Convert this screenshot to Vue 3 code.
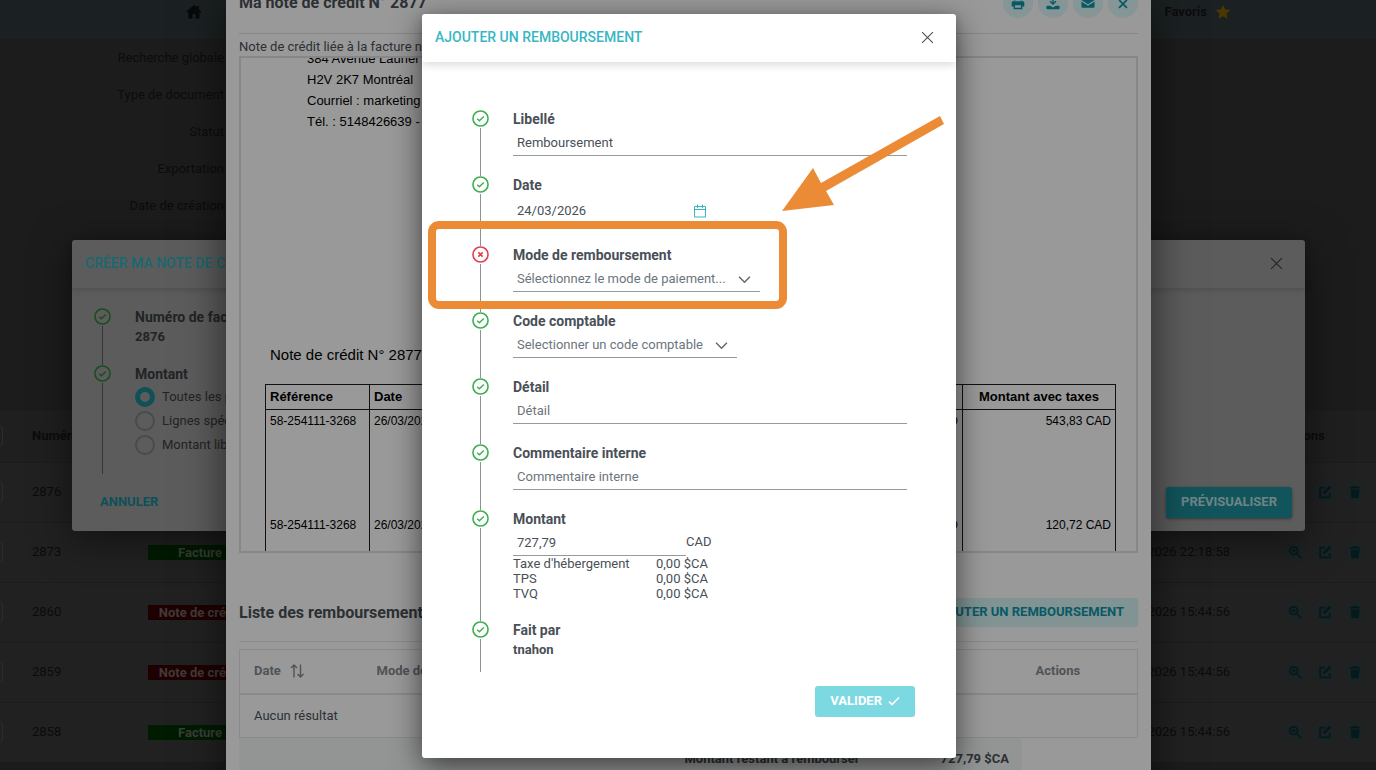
<script setup>
import { ref } from "vue";

const icons = {
  home: "M8 1 0.5 7.6 1.6 8.8 2.5 8v6.5h4V10h3v4.5h4V8l.9.8 1.1-1.2-2.5-2.2V2h-2v1.6z",
  star: "M8 .8l2.2 4.7 5.1.6-3.8 3.5 1 5.1L8 12.2l-4.5 2.5 1-5.1L.7 6.1l5.1-.6z",
  print:
    "M3.5 1h9v4h-1.6V2.6H5.1V5H3.5zM2.5 6h11A1.7 1.7 0 0 1 15.2 7.7V12H13v3H3v-3H.8V7.7A1.7 1.7 0 0 1 2.5 6zM4.6 10.5v3h6.8v-3z",
  download:
    "M7.2 1h1.6v6.3l2-2 1.1 1.2L8 10.4 4.1 6.5l1.1-1.2 2 2zM1.5 11h3.2L8 13.2 11.3 11h3.2a1 1 0 0 1 1 1v2a1 1 0 0 1-1 1h-13a1 1 0 0 1-1-1v-2a1 1 0 0 1 1-1z",
  mail: "M2 2.5h12A1.5 1.5 0 0 1 15.5 4v.6L8 9.4.5 4.6V4A1.5 1.5 0 0 1 2 2.5zM.5 6.3 8 11l7.5-4.7V12a1.5 1.5 0 0 1-1.5 1.5H2A1.5 1.5 0 0 1 .5 12z",
  trash: "M5.5 1h5l.6 1.2H14V4H2V2.2h2.9zM3 5h10l-.6 8.6A1.5 1.5 0 0 1 10.9 15H5.1a1.5 1.5 0 0 1-1.5-1.4z",
};

const filters = [
  "Recherche globale",
  "Type de document",
  "Statut",
  "Exportation",
  "Date de création",
];

const documents = [
  { number: 2876, type: "Note de crédit", date: "24/03/2026 22:18:58" },
  { number: 2873, type: "Facture", date: "23/03/2026 22:18:58" },
  { number: 2860, type: "Note de crédit", date: "20/03/2026 15:44:56" },
  { number: 2859, type: "Note de crédit", date: "20/03/2026 15:44:56" },
  { number: 2858, type: "Facture", date: "20/03/2026 15:44:56" },
];

const lines = [
  { ref: "58-254111-3268", date: "26/03/2026", total: "543,83 CAD" },
  { ref: "58-254111-3268", date: "26/03/2026", total: "120,72 CAD" },
];

const amountModes = ["Toutes les prestations", "Lignes spécifiques", "Montant libre"];
const amountMode = ref(amountModes[0]);

const taxes = [
  { name: "Taxe d'hébergement", amount: "0,00 $CA" },
  { name: "TPS", amount: "0,00 $CA" },
  { name: "TVQ", amount: "0,00 $CA" },
];

const label = ref("Remboursement");
const date = ref("24/03/2026");
const paymentMode = ref("");
const accountCode = ref("");
const detail = ref("");
const comment = ref("");
const amount = ref("727,79");
</script>

<template>
  <div class="app">
    <div class="page">
      <header class="topbar">
        <svg class="home" viewBox="0 0 16 16"><path :d="icons.home" /></svg>
        <div class="favorites">
          <span>Favoris</span>
          <svg viewBox="0 0 16 16"><path :d="icons.star" /></svg>
        </div>
      </header>
      <ul class="filters">
        <li v-for="filter in filters" :key="filter">{{ filter }}</li>
      </ul>
      <table class="documents">
        <thead>
          <tr>
            <th class="col-check"><input type="checkbox" aria-label="Tout" /></th>
            <th class="col-number">Numéro</th>
            <th class="col-type"></th>
            <th></th>
            <th class="col-date"></th>
            <th class="col-actions">Actions</th>
          </tr>
        </thead>
        <tbody>
          <tr v-for="doc in documents" :key="doc.number">
            <td class="col-check">
              <input type="checkbox" :aria-label="String(doc.number)" />
            </td>
            <td class="col-number">{{ doc.number }}</td>
            <td class="col-type">
              <span class="badge" :class="{ credit: doc.type !== 'Facture' }">{{
                doc.type
              }}</span>
            </td>
            <td></td>
            <td class="col-date">{{ doc.date }}</td>
            <td class="col-actions">
              <div class="row-actions">
                <button type="button" aria-label="Voir">
                  <svg viewBox="0 0 16 16" class="stroked">
                    <circle cx="6.5" cy="6.5" r="4.5" />
                    <path d="M10 10l5 5M6.5 4.5v4M4.5 6.5h4" />
                  </svg>
                </button>
                <button type="button" aria-label="Modifier">
                  <svg viewBox="0 0 16 16" class="stroked">
                    <path d="M8 3H2.5v11h11V9" />
                    <path d="M6.5 9.5 14 2" class="pen" />
                  </svg>
                </button>
                <button type="button" aria-label="Supprimer">
                  <svg viewBox="0 0 16 16"><path :d="icons.trash" /></svg>
                </button>
              </div>
            </td>
          </tr>
        </tbody>
      </table>
    </div>

    <div class="layer layer-create">
      <section class="dialog create">
        <header class="dialog-head">
          <h2>CRÉER MA NOTE DE CRÉDIT</h2>
          <button type="button" class="close" aria-label="Fermer">
            <svg viewBox="0 0 12 12"><path d="M1 1l10 10M11 1 1 11" /></svg>
          </button>
        </header>
        <ol class="steps">
          <li class="step">
            <div class="marker">
              <svg viewBox="0 0 18 18">
                <circle cx="9" cy="9" r="8" />
                <path d="M5.5 9.3l2.3 2.2 4.7-4.7" />
              </svg>
            </div>
            <div class="content">
              <h3>Numéro de facture</h3>
              <strong class="value">2876</strong>
            </div>
          </li>
          <li class="step">
            <div class="marker">
              <svg viewBox="0 0 18 18">
                <circle cx="9" cy="9" r="8" />
                <path d="M5.5 9.3l2.3 2.2 4.7-4.7" />
              </svg>
            </div>
            <div class="content">
              <h3>Montant</h3>
              <div class="radios">
                <label v-for="mode in amountModes" :key="mode">
                  <input v-model="amountMode" type="radio" name="mode" :value="mode" />
                  {{ mode }}
                </label>
              </div>
            </div>
          </li>
        </ol>
        <footer class="create-foot">
          <button type="button" class="cancel">ANNULER</button>
          <button type="button" class="preview">PRÉVISUALISER</button>
        </footer>
      </section>
    </div>

    <div class="layer layer-note">
      <section class="note">
        <header class="note-head">
          <h2>Ma note de crédit N° 2877</h2>
          <div class="note-actions">
            <button type="button" aria-label="Imprimer">
              <svg viewBox="0 0 16 16"><path :d="icons.print" fill-rule="evenodd" /></svg>
            </button>
            <button type="button" aria-label="Télécharger">
              <svg viewBox="0 0 16 16"><path :d="icons.download" /></svg>
            </button>
            <button type="button" aria-label="Envoyer">
              <svg viewBox="0 0 16 16"><path :d="icons.mail" /></svg>
            </button>
            <button type="button" aria-label="Fermer">
              <svg viewBox="0 0 16 16" class="stroked">
                <path d="M3.5 4.500l9 9M12.500 4.500l-9 9" />
              </svg>
            </button>
          </div>
        </header>
        <p class="linked">Note de crédit liée à la facture n° 2876</p>
        <div class="document">
          <address>
            384 Avenue Laurier<br />
            H2V 2K7 Montréal<br />
            Courriel : marketing<br />
            Tél. : 5148426639 -
          </address>
          <p class="document-title">Note de crédit N° 2877</p>
          <table class="lines">
            <thead>
              <tr>
                <th class="line-ref">Référence</th>
                <th class="line-net">Date</th>
                <th class="line-total">Montant avec taxes</th>
              </tr>
            </thead>
            <tbody>
              <tr v-for="(line, i) in lines" :key="i">
                <td>{{ line.ref }}</td>
                <td>
                  <div class="split">
                    <span>{{ line.date }}</span>
                    <span>CAD</span>
                  </div>
                </td>
                <td class="line-total">{{ line.total }}</td>
              </tr>
            </tbody>
          </table>
        </div>
        <div class="refunds-head">
          <h3>Liste des remboursements</h3>
          <button type="button">AJOUTER UN REMBOURSEMENT</button>
        </div>
        <table class="refunds">
          <thead>
            <tr>
              <th class="refund-date">
                <div class="sortable">
                  <span>Date</span>
                  <svg viewBox="0 0 14 14">
                    <path d="M4 13.5V1M1 4l3-3 3 3M10.5.5V13M7.5 10l3 3 3-3" />
                  </svg>
                </div>
              </th>
              <th>Mode de remboursement</th>
              <th class="refund-actions">Actions</th>
            </tr>
          </thead>
          <tbody>
            <tr>
              <td colspan="3">Aucun résultat</td>
            </tr>
          </tbody>
        </table>
        <div class="remaining">
          <span>Montant restant à rembourser</span>
          <span>727,79 $CA</span>
        </div>
      </section>
    </div>

    <div class="layer layer-refund">
      <form class="dialog refund" @submit.prevent>
        <header class="dialog-head">
          <h2>AJOUTER UN REMBOURSEMENT</h2>
          <button type="button" class="close" aria-label="Fermer">
            <svg viewBox="0 0 12 12"><path d="M1 1l10 10M11 1 1 11" /></svg>
          </button>
        </header>
        <ol class="steps">
          <li class="step">
            <div class="marker">
              <svg viewBox="0 0 18 18">
                <circle cx="9" cy="9" r="8" />
                <path d="M5.5 9.3l2.3 2.2 4.7-4.7" />
              </svg>
            </div>
            <div class="content">
              <label for="label">Libellé</label>
              <input id="label" v-model="label" type="text" class="field" />
            </div>
          </li>
          <li class="step">
            <div class="marker">
              <svg viewBox="0 0 18 18">
                <circle cx="9" cy="9" r="8" />
                <path d="M5.5 9.3l2.3 2.2 4.7-4.7" />
              </svg>
            </div>
            <div class="content">
              <label for="date">Date</label>
              <div class="field date-field">
                <input id="date" v-model="date" type="text" />
                <svg viewBox="0 0 14 14">
                  <path d="M1.5 2.5h11v10.5h-11zM1.5 5.5h11M4.5.5V4M9.5.5V4" />
                </svg>
              </div>
            </div>
          </li>
          <li class="step invalid">
            <div class="marker">
              <svg viewBox="0 0 18 18">
                <circle cx="9" cy="9" r="8" />
                <path d="M6.7 6.7l4.6 4.6M11.3 6.7l-4.6 4.6" />
              </svg>
            </div>
            <div class="content">
              <label for="mode">Mode de remboursement</label>
              <div class="picker mode-picker">
                <select id="mode" v-model="paymentMode" class="field">
                  <option value="">Sélectionnez le mode de paiement...</option>
                </select>
                <svg viewBox="0 0 12 8"><path d="M1 1.5l5 5 5-5" /></svg>
              </div>
            </div>
          </li>
          <li class="step">
            <div class="marker">
              <svg viewBox="0 0 18 18">
                <circle cx="9" cy="9" r="8" />
                <path d="M5.5 9.3l2.3 2.2 4.7-4.7" />
              </svg>
            </div>
            <div class="content">
              <label for="code">Code comptable</label>
              <div class="picker code-picker">
                <select id="code" v-model="accountCode" class="field">
                  <option value="">Selectionner un code comptable</option>
                </select>
                <svg viewBox="0 0 12 8"><path d="M1 1.5l5 5 5-5" /></svg>
              </div>
            </div>
          </li>
          <li class="step">
            <div class="marker">
              <svg viewBox="0 0 18 18">
                <circle cx="9" cy="9" r="8" />
                <path d="M5.5 9.3l2.3 2.2 4.7-4.7" />
              </svg>
            </div>
            <div class="content">
              <label for="detail">Détail</label>
              <input id="detail" v-model="detail" type="text" class="field" placeholder="Détail" />
            </div>
          </li>
          <li class="step">
            <div class="marker">
              <svg viewBox="0 0 18 18">
                <circle cx="9" cy="9" r="8" />
                <path d="M5.5 9.3l2.3 2.2 4.7-4.7" />
              </svg>
            </div>
            <div class="content">
              <label for="comment">Commentaire interne</label>
              <input
                id="comment"
                v-model="comment"
                type="text"
                class="field"
                placeholder="Commentaire interne"
              />
            </div>
          </li>
          <li class="step">
            <div class="marker">
              <svg viewBox="0 0 18 18">
                <circle cx="9" cy="9" r="8" />
                <path d="M5.5 9.3l2.3 2.2 4.7-4.7" />
              </svg>
            </div>
            <div class="content">
              <label for="amount">Montant</label>
              <div class="amount">
                <input id="amount" v-model="amount" type="text" class="field" />
                <span>CAD</span>
              </div>
              <dl class="taxes">
                <template v-for="tax in taxes" :key="tax.name">
                  <dt>{{ tax.name }}</dt>
                  <dd>{{ tax.amount }}</dd>
                </template>
              </dl>
            </div>
          </li>
          <li class="step last">
            <div class="marker">
              <svg viewBox="0 0 18 18">
                <circle cx="9" cy="9" r="8" />
                <path d="M5.5 9.3l2.3 2.2 4.7-4.7" />
              </svg>
            </div>
            <div class="content">
              <h3>Fait par</h3>
              <strong class="value">tnahon</strong>
            </div>
          </li>
        </ol>
        <footer class="refund-foot">
          <button type="submit" disabled>
            VALIDER
            <svg viewBox="0 0 12 10"><path d="M1 5.5l3 3L11 1.5" /></svg>
          </button>
        </footer>
        <div class="highlight"></div>
        <svg class="arrow" viewBox="0 0 164 98">
          <path d="M0 96 31 53 39 68 158 1 162 9 44 76 52 90z" />
        </svg>
      </form>
    </div>
  </div>
</template>

<style>
body {
  margin: 0;
  background: #1c1c1c;
}
</style>

<style scoped>
.app {
  position: relative;
  height: 100vh;
  overflow: hidden;
  font-family: Roboto, "Liberation Sans", sans-serif;
  font-size: 13px;
  line-height: 16px;
  color: #495057;
}

.app * {
  box-sizing: border-box;
}

h2,
h3,
p,
ul,
ol,
dl,
dd {
  margin: 0;
  padding: 0;
  list-style: none;
}

button,
input,
select {
  font: inherit;
  color: inherit;
  margin: 0;
  padding: 0;
  border: 0;
  background: none;
}

svg {
  display: block;
}

/* page */
.page {
  color: #0b0c0d;
  background: #1c1c1c;
}

.topbar {
  display: flex;
  justify-content: space-between;
  height: 39px;
  padding: 4px 145px 0 186px;
  background: #1b2122;
}

.topbar svg {
  width: 16px;
  height: 16px;
  fill: #080909;
}

.favorites {
  display: flex;
  gap: 8px;
  font-weight: 700;
}

.favorites svg {
  fill: #4b3800;
}

.filters {
  display: grid;
  grid-auto-rows: 37px;
  width: 224px;
  height: 372px;
  text-align: right;
  line-height: 37px;
}

.documents {
  width: 100%;
  table-layout: fixed;
  border-collapse: collapse;
  background: #212121;
}

.documents th,
.documents td {
  padding: 0;
  text-align: left;
  border-bottom: 1px solid #1b1c1c;
}

.documents th {
  height: 51px;
  font-weight: 700;
  background: #1f1f1f;
}

.documents td {
  height: 60px;
}

.documents .col-check {
  width: 32px;
}

.documents .col-check input {
  display: block;
  appearance: none;
  width: 20px;
  height: 20px;
  margin-left: -17px;
  border: 1px solid #2b2c2c;
  border-radius: 3px;
}

.documents .col-number {
  width: 116px;
}

.documents .col-type {
  width: 104px;
}

.documents .col-date {
  width: 140px;
  padding-right: 10px;
  text-align: right;
}

.documents .col-actions {
  width: 136px;
  padding-left: 40px;
}

.badge {
  display: block;
  line-height: 15px;
  text-align: center;
  font-weight: 700;
  color: #3a3f3a;
  background: #001b00;
}

.badge.credit {
  color: #423a3a;
  background: #1e0000;
}

.row-actions {
  display: flex;
  gap: 4px;
  padding-left: 2px;
}

.row-actions button {
  display: grid;
  place-items: center;
  width: 26px;
  height: 26px;
  border-radius: 50%;
  background: #1e2223;
}

.row-actions svg {
  width: 14px;
  height: 14px;
  fill: #021b1e;
}

.row-actions .stroked {
  fill: none;
  stroke: #021b1e;
  stroke-width: 2;
}

.row-actions .pen {
  stroke-width: 3;
}

/* stacked dialogs */
.layer {
  position: absolute;
  inset: 0;
  display: flex;
  justify-content: center;
  align-items: center;
}

.dialog {
  position: relative;
  border-radius: 3px;
}

.dialog-head {
  display: flex;
  justify-content: space-between;
  align-items: center;
  height: 48px;
  padding: 0 22px 2px 13px;
}

.dialog-head h2 {
  font-size: 14px;
  font-weight: 500;
}

.close svg {
  width: 13px;
  height: 13px;
  fill: none;
  stroke: currentColor;
}

.step {
  display: flex;
  gap: 24px;
}

.marker {
  display: flex;
  flex-direction: column;
  align-items: center;
  gap: 1px;
  flex: none;
  width: 17px;
}

.marker svg {
  width: 17px;
  height: 17px;
  fill: none;
  stroke: #3fae52;
  stroke-width: 1.7;
}

.marker path {
  stroke-width: 1.5;
}

.marker::after {
  content: "";
  flex: 1;
  width: 1px;
  background: #8f9396;
}

.content {
  flex: 1;
  padding-bottom: 20px;
}

.content h3,
.content > label {
  display: block;
  font-size: 14px;
  font-weight: 700;
  line-height: 18px;
}

.value {
  display: block;
  margin-top: 3px;
  line-height: 16px;
}

/* credit note creation */
.layer-create {
  padding: 1px 71px 0 72px;
}

.create {
  flex: 1;
  color: #212426;
  background: #5c5c5c;
  box-shadow: 0 8px 40px rgba(0, 0, 0, 0.5);
}

.create .dialog-head {
  box-shadow: 0 2px 6px rgba(0, 0, 0, 0.15);
}

.create .dialog-head h2 {
  color: #176970;
}

.create .steps {
  padding: 20px 22px 0;
}

.create .marker svg {
  stroke: #1a4d22;
}

.create .marker::after {
  background: #343637;
}

.radios {
  display: grid;
  grid-auto-rows: 24px;
  margin: 2px 0 -3px;
}

.radios label {
  display: flex;
  align-items: center;
  gap: 7px;
}

.radios input {
  appearance: none;
  width: 20px;
  height: 20px;
  border: 2px solid #484b4d;
  border-radius: 50%;
}

.radios input:checked {
  border: 5px solid #0f5157;
}

.create-foot {
  display: flex;
  justify-content: space-between;
  align-items: center;
  padding: 13px 13px 13px 28px;
  font-weight: 700;
}

.create-foot button {
  height: 31px;
  padding-bottom: 2px;
}

.cancel {
  color: #0d5158;
}

.create-foot .preview {
  padding: 0 15px 2px;
  border-radius: 3px;
  color: #6d8587;
  background: #12545b;
  box-shadow: 0 1px 3px rgba(0, 0, 0, 0.4);
}

/* credit note */
.layer-note {
  padding: 0 225px 0 226px;
  align-items: flex-start;
}

.note {
  flex: 1;
  min-width: 0;
  min-height: 100vh;
  margin-top: -12px;
  padding: 0 13px 20px;
  color: #2c3034;
  background: #999;
  box-shadow: 0 8px 40px rgba(0, 0, 0, 0.6);
}

.note-head {
  display: flex;
  justify-content: space-between;
  align-items: center;
  padding-bottom: 15px;
  border-bottom: 1px solid #858788;
}

.note-head h2 {
  font-size: 16px;
  font-weight: 700;
}

.note-actions {
  display: flex;
  gap: 5px;
}

.note-actions button {
  display: grid;
  place-items: center;
  width: 30px;
  height: 30px;
  border-radius: 50%;
  background: #869595;
}

.note-actions svg {
  width: 14px;
  height: 14px;
  fill: #075a65;
}

.note-actions .stroked {
  stroke: #075a65;
  stroke-width: 2;
}

.linked {
  padding-top: 4px;
  line-height: 18px;
}

.document {
  height: 497px;
  padding: 0 20px 0 24px;
  border: 2px solid #858788;
  overflow: hidden;
  font-family: "Liberation Sans", Arial, sans-serif;
  color: #000;
}

.document address {
  margin-top: -10px;
  padding-left: 42px;
  font-style: normal;
  line-height: 21px;
}

.document-title {
  margin-top: 213px;
  padding-left: 5px;
  font-size: 15px;
  line-height: 20px;
}

.lines {
  width: 100%;
  margin-top: 19px;
  table-layout: fixed;
  border-collapse: collapse;
  border: 1px solid #111;
}

.lines th,
.lines td {
  padding: 4px;
  text-align: left;
  vertical-align: top;
  border-right: 1px solid #111;
}

.lines th {
  border-bottom: 1px solid #111;
}

.lines td {
  height: 104px;
  padding-top: 3px;
  font-size: 12px;
}

.lines .line-ref {
  width: 104px;
}

.lines .line-total {
  width: 153px;
  text-align: center;
}

.lines td.line-total {
  text-align: right;
}

.split {
  display: flex;
  justify-content: space-between;
}

.refunds-head {
  display: flex;
  justify-content: space-between;
  align-items: center;
  margin-top: 45px;
  padding-bottom: 14px;
  border-bottom: 1px solid #898b8c;
}

.refunds-head h3 {
  font-size: 16px;
  font-weight: 700;
}

.refunds-head button {
  height: 29px;
  padding: 0 14px 2px;
  border-radius: 3px;
  font-weight: 700;
  color: #075a65;
  background: #829393;
}

.refunds {
  width: 100%;
  margin-top: 7px;
  table-layout: fixed;
  border-collapse: collapse;
  border: 1px solid #888a8b;
}

.refunds th,
.refunds td {
  height: 44px;
  padding: 0 14px;
  text-align: left;
}

.refunds th {
  font-weight: 700;
  color: #4f5356;
  border-bottom: 2px solid #888a8b;
}

.refunds .refund-date {
  width: 123px;
}

.sortable {
  display: flex;
  align-items: center;
  gap: 9px;
}

.refunds svg {
  width: 14px;
  height: 14px;
  fill: none;
  stroke: #4f5356;
  stroke-width: 1.4;
}

.refunds .refund-actions {
  width: 116px;
}

.remaining {
  display: flex;
  justify-content: flex-end;
  gap: 81px;
  height: 43px;
  margin-right: 116px;
  padding: 0 13px;
  line-height: 42px;
  font-weight: 700;
  background: #939494;
}

/* refund form */
.layer-refund {
  padding: 2px 0 0 2px;
}

.refund {
  width: 534px;
  color: #495057;
  background: #fff;
  box-shadow: 0 8px 30px rgba(0, 0, 0, 0.6);
}

.refund .dialog-head {
  box-shadow: 0 3px 8px rgba(0, 0, 0, 0.14);
}

.refund .dialog-head h2 {
  color: #37b7c3;
}

.refund .steps {
  padding: 48px 49px 0 50px;
}

.invalid .marker svg {
  stroke: #e0424d;
}

.invalid .marker path {
  stroke-width: 1.8;
}

.field {
  display: block;
  width: 100%;
  height: 25px;
  margin-top: 3px;
  padding: 0 4px 1px;
  border-bottom: 1px solid #959a9d;
  outline: 0;
}

.field::placeholder {
  color: #6c757d;
  opacity: 1;
}

.date-field {
  display: flex;
  justify-content: space-between;
  align-items: center;
  width: 198px;
  height: 29px;
}

.date-field input {
  min-width: 0;
}

.date-field svg {
  width: 14px;
  height: 14px;
  fill: none;
  stroke: #37b7c3;
}

.picker {
  position: relative;
}

.mode-picker {
  width: 247px;
}

.code-picker {
  width: 224px;
}

.picker select {
  appearance: none;
  color: #6c757d;
}

.picker svg {
  position: absolute;
  top: 8px;
  right: 9px;
  width: 13px;
  height: 9px;
  fill: none;
  stroke: #5f676d;
  stroke-width: 1.3;
  pointer-events: none;
}

.amount {
  display: flex;
  align-items: center;
}

.amount .field {
  width: 173px;
}

.taxes {
  display: grid;
  grid-template-columns: 143px 1fr;
  line-height: 15px;
}

.last .content {
  padding-bottom: 14px;
}

.refund-foot {
  display: flex;
  justify-content: flex-end;
  padding: 14px 41px 41px;
}

.refund-foot button {
  display: flex;
  align-items: center;
  gap: 6px;
  height: 31px;
  padding: 0 15px 2px;
  border-radius: 3px;
  font-weight: 700;
  color: #fff;
  background: #7cd9e2;
}

.refund-foot svg {
  width: 12px;
  height: 10px;
  fill: none;
  stroke: #fff;
  stroke-width: 1.6;
}

.highlight {
  position: absolute;
  top: 207px;
  left: 6px;
  width: 359px;
  height: 88px;
  border: 8px solid #ec8b35;
  border-radius: 11px;
}

.arrow {
  position: absolute;
  top: 101px;
  left: 360px;
  width: 164px;
  height: 98px;
  fill: #ec8b35;
}
</style>
